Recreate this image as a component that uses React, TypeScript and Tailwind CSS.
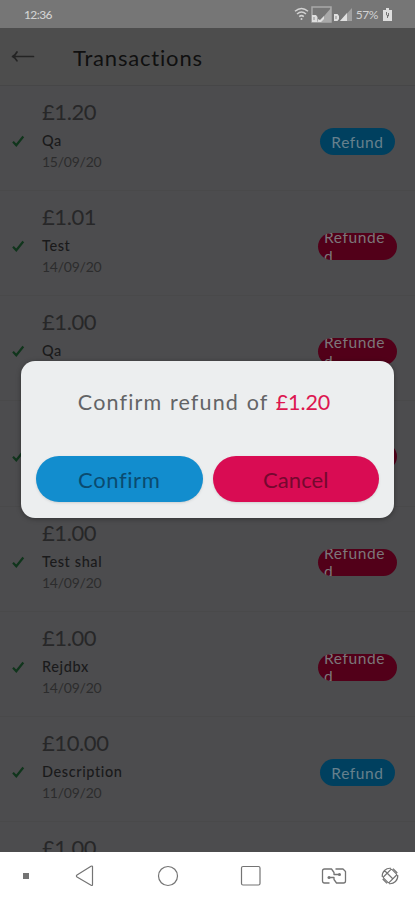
import clsx from 'clsx'

type Transaction = {
  id: number
  amount: string
  description: string
  date: string
  refunded: boolean
}

const transactions: Transaction[] = [
  { id: 1, amount: '£1.20', description: 'Qa', date: '15/09/20', refunded: false },
  { id: 2, amount: '£1.01', description: 'Test', date: '14/09/20', refunded: true },
  { id: 3, amount: '£1.00', description: 'Qa', date: '14/09/20', refunded: true },
  { id: 4, amount: '£1.00', description: 'Test', date: '14/09/20', refunded: true },
  { id: 5, amount: '£1.00', description: 'Test shal', date: '14/09/20', refunded: true },
  { id: 6, amount: '£1.00', description: 'Rejdbx', date: '14/09/20', refunded: true },
  { id: 7, amount: '£10.00', description: 'Description', date: '11/09/20', refunded: false },
  { id: 8, amount: '£1.00', description: 'Test', date: '11/09/20', refunded: true },
]

const StatusBar = () => (
  <div className="flex h-7 shrink-0 items-center justify-between bg-[#767676] pr-[23px] pl-6 text-[#d2d2d2]">
    <span className="pt-0.5 text-[12px] leading-none font-medium tracking-[-0.6px]">12:36</span>
    <div className="flex items-center">
      <svg width="15" height="14" viewBox="0 0 15 14" fill="none" stroke="currentColor" strokeWidth="1.5">
        <path d="M1 4.3C5 .8 10 .8 14 4.3M3 7c3-2.6 6-2.6 9 0M5.2 9.6c1.4-1.2 3.2-1.2 4.6 0" />
        <circle cx="7.5" cy="12" r="1" fill="currentColor" stroke="none" />
      </svg>
      <svg className="ml-0.5" width="21" height="17" viewBox="0 0 21 17">
        <path d="M1 1h19v15H1z" fill="none" stroke="#a9a9a9" strokeWidth="1.5" />
        <path d="M20 2v14H8z" fill="#a9a9a9" />
        <path d="M1 9h4l1.5 2v5H1zM7 16v-3l2 1 4-4v3l-3 3z" fill="#dedede" />
        <path d="M3 11v3" stroke="#8c8c8c" />
      </svg>
      <svg className="ml-0.5" width="18" height="15" viewBox="0 0 18 15">
        <path d="M18 1v13H6z" fill="#a0a0a0" />
        <path d="M13 6v8H6zM0 7h3.5L5 9v3l-1.5 2H0z" fill="#e0e0e0" />
        <path d="M2 9v3" stroke="#8c8c8c" />
      </svg>
      <span className="ml-1 pt-0.5 text-[12px] leading-none tracking-[-0.4px]">57%</span>
      <svg className="ml-[5px]" width="9" height="13" viewBox="0 0 9 13">
        <path d="M3 0h3v2h3v11H0V2h3z" fill="#dedede" />
        <path d="M3.5 4v3l2 1V5M4.5 8v2" fill="none" stroke="#767676" />
      </svg>
    </div>
  </div>
)

const Header = () => (
  <header className="flex h-[57px] shrink-0 items-center bg-[#4d4d4d] pl-[11px]">
    <svg width="24" height="14" viewBox="0 0 24 14" fill="none" stroke="#242424" strokeWidth="1.7" strokeLinecap="round" strokeLinejoin="round">
      <path d="M22.5 6.5H1.5M6 2C4.7 4.5 3.5 5.7 1.5 6.5c2 .8 3.2 2 4.5 4.3" />
    </svg>
    <h1 className="ml-[38px] pt-0.5 text-[22px] leading-none tracking-[0.82px] text-[#101010]">Transactions</h1>
  </header>
)

const TransactionRow = ({ transaction }: { transaction: Transaction }) => (
  <li className="flex h-[105.15px] shrink-0 border-b border-[#49494a]">
    <svg className="mt-[49px] ml-3 shrink-0" width="13" height="13" viewBox="0 0 13 13" fill="none" stroke="#10351c" strokeWidth="2.2">
      <path d="M1 6.8 4.3 10.3 11.3 1.5" />
    </svg>
    <div className="ml-[17px] flex-1 pt-[13px]">
      <p className="text-[22px] leading-[26px] tracking-[-0.4px] text-[#272728]">{transaction.amount}</p>
      <p className="mt-[6px] text-[14.5px] leading-5 font-medium tracking-[0.6px] text-[#1a1a1b]">{transaction.description}</p>
      <p className="mt-[2px] text-[14px] leading-[18px] tracking-[-0.25px] text-[#2c2c2d]">{transaction.date}</p>
    </div>
    <div
      className={clsx(
        'mt-[42px] h-[27px] shrink-0 overflow-hidden rounded-full text-[15.5px] tracking-[0.6px]',
        transaction.refunded
          ? 'mr-[18px] w-[79px] bg-[#520019] pl-1.5 text-[#7c777a]'
          : 'mr-5 w-[75px] bg-[#00405f] text-center leading-[29px] text-[#66808d]',
      )}
    >
      {transaction.refunded ? (
        <span className="-mt-[5px] block w-16 leading-[18.5px] break-all">Refunded</span>
      ) : (
        'Refund'
      )}
    </div>
  </li>
)

const RefundDialog = ({ amount }: { amount: string }) => (
  <div className="absolute top-[361px] left-[21px] h-[157px] w-[373px] rounded-[14px] bg-[#eceeef] px-[15px] shadow-[0_1px_5px_rgba(0,0,0,0.35)]">
    <p className="pt-[27px] pr-[7px] text-center text-[21.5px] leading-7 tracking-[1.15px] whitespace-nowrap text-[#636466] [word-spacing:1px]">
      Confirm refund of <span className="tracking-[-0.1px] text-[#dd1751]">{amount}</span>
    </p>
    <div className="mt-10 flex gap-2.5 text-[22px]">
      <button className="h-[46px] flex-1 rounded-full bg-[#128dce] tracking-[0.6px] text-[#0a4b70] shadow-sm">Confirm</button>
      <button className="h-[46px] flex-1 rounded-full bg-[#d90c53] tracking-[0.1px] text-[#75082f] shadow-sm">Cancel</button>
    </div>
  </div>
)

const NavigationBar = () => (
  <nav className="flex h-12 shrink-0 items-center bg-white pl-[23px] text-[#747474]">
    <span className="size-1.5 bg-current" />
    <svg className="ml-[46px]" width="20" height="22" viewBox="0 0 20 22" fill="none" stroke="currentColor" strokeWidth="1.2" strokeLinejoin="round">
      <path d="M17.5 1.5v18q0 1.5-1.4.7L2 12q-1.2-1 0-2L16 1.3q1.2-.7 1.5.2Z" />
    </svg>
    <svg className="ml-[62px]" width="22" height="22" viewBox="0 0 22 22" fill="none" stroke="currentColor" strokeWidth="1.2">
      <circle cx="11" cy="11" r="9.5" />
    </svg>
    <svg className="ml-[61px]" width="22" height="22" viewBox="0 0 22 22" fill="none" stroke="currentColor" strokeWidth="1.2">
      <rect x="1.5" y="1.5" width="18.5" height="18.5" rx="1.5" />
    </svg>
    <svg className="ml-[59px]" width="26" height="18" viewBox="0 0 26 18" fill="none" stroke="currentColor" strokeWidth="1.3" strokeLinejoin="round">
      <path d="M8.5 16h-5q-2 0-2-2V4q0-2 2-2h7L13 5.5v2h5.5" />
      <path d="M14.5 2H22l2.5 2.5V14q0 2-2 2h-7L13 12.5v-2H8" />
      <circle cx="18.5" cy="7.5" r="1.5" fill="currentColor" stroke="none" />
      <circle cx="8" cy="10.5" r="1.5" fill="currentColor" stroke="none" />
    </svg>
    <svg className="ml-[33px]" width="20" height="20" viewBox="0 0 20 20" fill="none" stroke="currentColor" strokeWidth="1.2">
      <rect x="6" y="4" width="8" height="12" rx="1" transform="rotate(45 10 10)" />
      <path d="M2.3 11A7.8 7.8 0 0 1 11 2.3M17.7 9A7.8 7.8 0 0 1 9 17.7M4.5 4.500l8.500 8.500M13 2.700l4.300 4.300M2.700 13 7 17.300" />
    </svg>
  </nav>
)

export default function App() {
  return (
    <div className="relative flex h-[900px] w-[415px] flex-col overflow-hidden bg-[#4c4c4e] font-['Lato','Noto_Sans',sans-serif]">
      <StatusBar />
      <Header />
      <ul className="flex min-h-0 flex-1 flex-col overflow-hidden border-t border-[#464647]">
        {transactions.map((transaction) => (
          <TransactionRow key={transaction.id} transaction={transaction} />
        ))}
      </ul>
      <NavigationBar />
      <RefundDialog amount="£1.20" />
    </div>
  )
}
